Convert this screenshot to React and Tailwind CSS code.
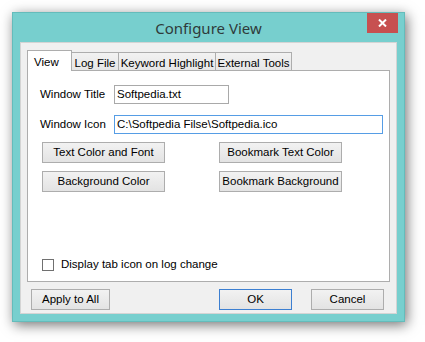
import React from "react";

const font = { fontFamily: '"Liberation Sans", Arial, sans-serif' };

const WinButton = ({ label, width, focused }) => (
  <button
    type="button"
    className={`h-[21px] ${width} border ${
      focused ? "border-[#3c7fd1]" : "border-[#adadad]"
    } bg-gradient-to-b from-[#f2f2f2] to-[#e3e3e3] text-[11.5px] text-black leading-none whitespace-nowrap flex items-center justify-center`}
  >
    {label}
  </button>
);

const Tab = ({ label, width, active }) =>
  active ? (
    <div
      className={`${width} h-[21px] bg-white border border-b-0 border-[#adadad] relative z-10 -mb-px flex items-start pl-[6px] pt-[3px] text-[11.5px] text-black whitespace-nowrap`}
    >
      {label}
    </div>
  ) : (
    <div
      className={`${width} h-[18px] bg-gradient-to-b from-[#f2f2f2] to-[#e6e6e6] border border-b-0 border-l-0 border-[#adadad] flex items-start justify-center pt-[2px] text-[11.5px] text-black whitespace-nowrap`}
    >
      {label}
    </div>
  );

const App = () => {
  return (
    <div className="w-[425px] h-[342px] bg-white pt-[12px] pl-[12px]" style={font}>
      <div className="relative w-[393px] h-[310px] bg-[#77cfce] border border-[#64bcbb] shadow-[2px_3px_12px_rgba(0,0,0,0.55)] flex flex-col">
        {/* title bar */}
        <div className="h-[29px] flex items-center justify-center">
          <span
            className="text-[15px] text-[#2f3b3b] pt-[2px]"
            style={{ fontFamily: '"Noto Sans", "Open Sans", sans-serif' }}
          >
            Configure View
          </span>
        </div>
        <div className="absolute top-0 right-[6px] w-[31px] h-[20px] bg-[#c75050] flex items-center justify-center">
          <svg width="9" height="8" viewBox="0 0 9 8">
            <path d="M1 0.5 L8 7.5 M8 0.5 L1 7.5" stroke="white" strokeWidth="2" />
          </svg>
        </div>

        {/* client area */}
        <div className="mx-[7px] h-[272px] bg-[#f0f0f0] border border-[#d4d4d4] flex flex-col px-[6px]">
          {/* tabs */}
          <div className="flex items-end mt-[6px] h-[21px]">
            <Tab label="View" width="w-[45px]" active />
            <Tab label="Log File" width="w-[47px]" />
            <Tab label="Keyword Highlight" width="w-[97px]" />
            <Tab label="External Tools" width="w-[76px]" />
          </div>

          {/* tab page */}
          <div className="w-[363px] h-[212px] bg-white border border-[#adadad] flex flex-col text-[11.5px] text-black">
            <div className="flex items-center mt-[14px] h-[19px]">
              <span className="w-[86px] pl-[12px] whitespace-nowrap">Window Title</span>
              <div className="w-[115px] h-[19px] border border-[#a9a9a9] bg-white flex items-center pl-[2px]">
                Softpedia.txt
              </div>
            </div>
            <div className="flex items-center mt-[11px] h-[19px]">
              <span className="w-[86px] pl-[12px] whitespace-nowrap">Window Icon</span>
              <div className="w-[269px] h-[19px] border border-[#569de5] bg-white flex items-center pl-[2px] whitespace-nowrap">
                C:\Softpedia Filse\Softpedia.ico
              </div>
            </div>
            <div className="flex mt-[8px] pl-[14px] gap-[54px]">
              <WinButton label="Text Color and Font" width="w-[123px]" />
              <WinButton label="Bookmark Text Color" width="w-[123px]" />
            </div>
            <div className="flex mt-[8px] pl-[14px] gap-[54px]">
              <WinButton label="Background Color" width="w-[123px]" />
              <WinButton label="Bookmark Background" width="w-[123px]" />
            </div>
            <div className="flex items-center mt-[64px] pl-[14px] gap-[7px]">
              <div className="w-[12px] h-[12px] border border-[#707070] bg-white" />
              <span className="whitespace-nowrap">Display tab icon on log change</span>
            </div>
          </div>

          {/* bottom buttons */}
          <div className="flex mt-[7px] pl-[4px]">
            <WinButton label="Apply to All" width="w-[79px]" />
            <div className="ml-[109px]">
              <WinButton label="OK" width="w-[73px]" focused />
            </div>
            <div className="ml-[19px]">
              <WinButton label="Cancel" width="w-[73px]" />
            </div>
          </div>
        </div>
      </div>
    </div>
  );
};

export default App;
